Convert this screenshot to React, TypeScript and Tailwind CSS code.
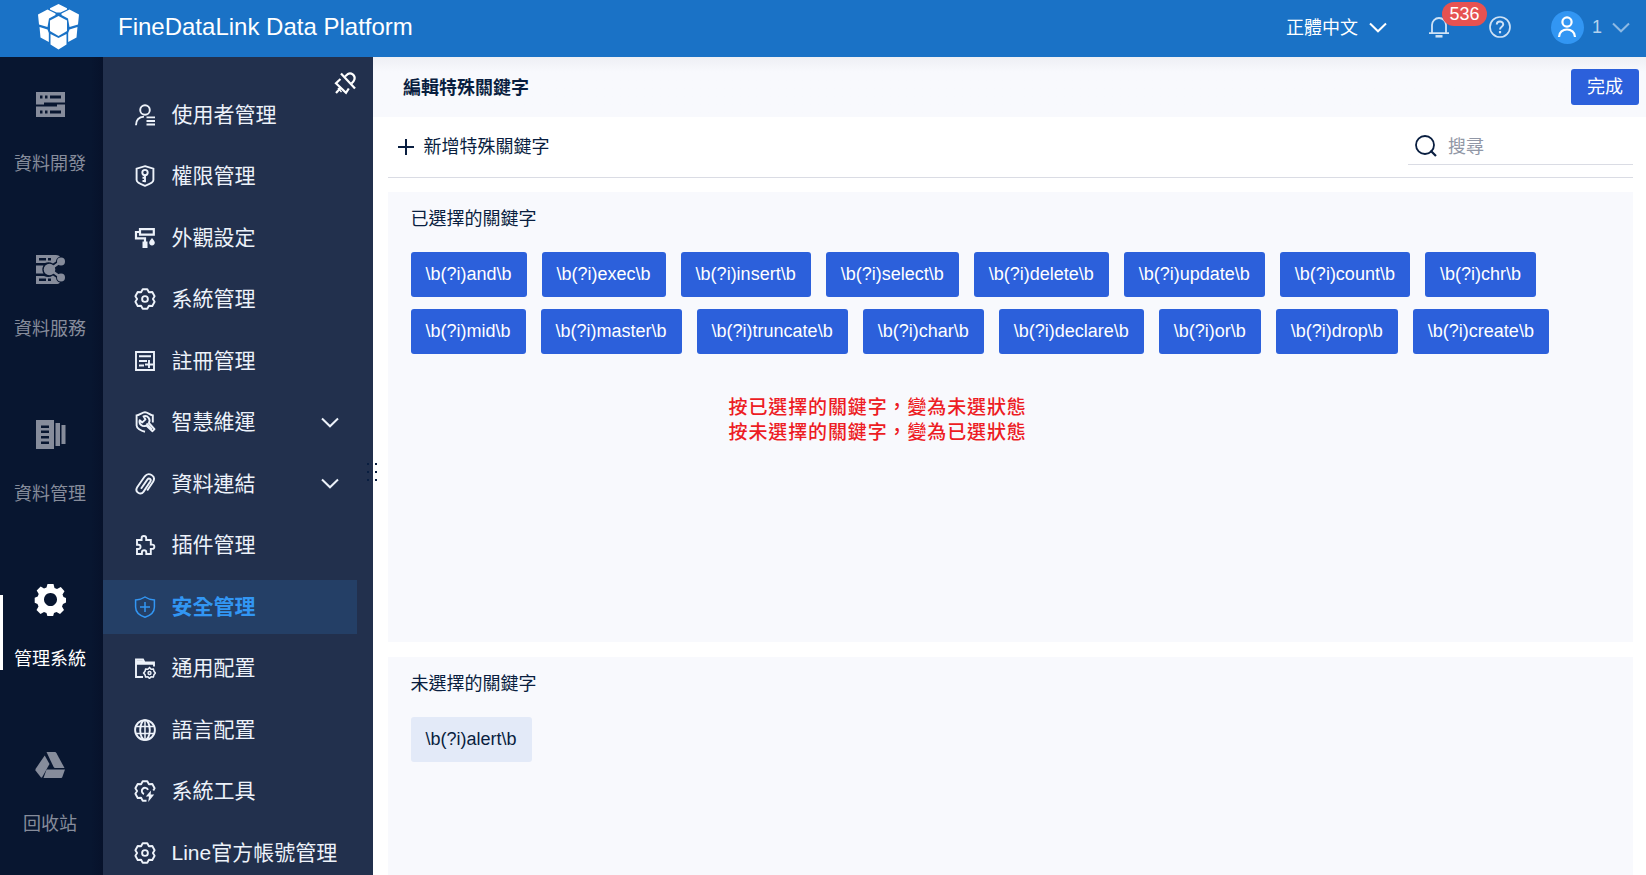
import { ReactNode, useState } from "react";

const selectedInit = [
  'and', 'exec', 'insert', 'select', 'delete', 'update', 'count', 'chr',
  'mid', 'master', 'truncate', 'char', 'declare', 'or', 'drop', 'create',
];

const Chevron = ({ className = '' }: { className?: string }) => (
  <svg width="18" height="11" viewBox="0 0 18 11" fill="none" stroke="currentColor" strokeWidth="2" className={className}>
    <path d="M1 1.5 9 9.3 17 1.5" />
  </svg>
);

/* 22x22 outline icons of the side menu */
const menuIcons: Record<string, ReactNode> = {
  user: (
    <>
      <circle cx="11" cy="6" r="4.8" />
      <path d="M2 21.2c0-5 2.8-8.2 8-8.6M12.5 13.4H21M12.5 17H21M12.5 20.5H21" />
    </>
  ),
  key: (
    <>
      <path d="M11 1.2 19.4 3.6V15c0 2-4.4 4.4-8.4 5.8-4-1.4-8.4-3.8-8.4-5.8V3.6Z" />
      <circle cx="11" cy="7.6" r="2.7" />
      <path d="M11 10.4v6.8M11 12.8H8.5M11 16H8.5" />
    </>
  ),
  roller: (
    <>
      <path d="M6 2.2h13.8v5.4H6ZM6 5H2v6.3h9V15" strokeWidth="2.2" />
      <path d="M8.5 14.5h5V21h-5Z" fill="currentColor" stroke="none" />
      <path d="M18 11c1.800 2.200 2.800 3.400 2.800 4.600a2.800 2.800 0 0 1-5.600 0c0-1.200 1-2.400 2.800-4.600Z" fill="currentColor" stroke="none" />
    </>
  ),
  gear: (
    <>
      <path d="M8.7 1.3h4.600L14.900 4.200l3.400-.2 2.300 4.300L18.900 11l1.700 2.700-2.300 4.300-3.400-.2-1.600 2.900H8.700l-1.600-2.900-3.400.2-2.300-4.300L3.100 11 1.400 8.300 3.700 4l3.400.2Z" strokeLinejoin="round" />
      <circle cx="11" cy="11" r="2.900" />
    </>
  ),
  register: (
    <path d="M2 2h18v18H2ZM5 6.300h12M5 11h8M5 15.500h5M15 10v8M11 14.500h8" />
  ),
  wrench: (
    <>
      <path d="M18.800 11.500V4.400C16.200 4 13.600 1.200 11 1.200S5.400 4 2.600 4.400V14.500c0 2.600 4 5.200 8.400 6.200" />
      <path d="M9.500 5.300c4.500-1.200 7.400 3 5.400 6.700l5.600 6.200-2 2-6.200-5.600c-4 1.800-7.600-1.400-6.600-5.400l2.600 2.200 3.200-3Z" strokeLinejoin="round" />
      <path d="M12.500 12.500l5.500 6" />
    </>
  ),
  clip: (
    <path d="M7 15.800 13.300 6.600c1.800-2.200 4.400-.4 3 1.900L9.600 18.600c-3 4.200-9.300.4-6.400-4.300l7.600-11c3.600-4.600 11.600-.6 8.400 5.200l-6 9" />
  ),
  plugin: (
    <path d="M3 6h4.600V4.300a2.300 2.300 0 0 1 4.600 0V6h4.600v4.600h1.400a2.100 2.100 0 0 1 0 4.300h-1.400V20h-4.500v-1.600a2.200 2.200 0 0 0-4.400 0V20H3v-5h1.400a2.100 2.100 0 0 0 0-4.300H3Z" />
  ),
  shield: (
    <g strokeWidth="1.500">
      <path d="M11 1c3 2 6.200 2.800 9.400 3V11c0 5-4 8.500-9.400 10.200C5.600 19.500 1.600 16 1.600 11V4c3.200-.2 6.400-1 9.400-3ZM11 6v10M6 11h10" />
    </g>
  ),
  folder: (
    <>
      <path d="M9 20H2V2.500h7l1.500 3H20V9.500" />
      <path d="M2 4.500h8M2 6.500h18" strokeWidth="2.400" />
      <path d="M15.500 10.500l1.600 1.700 2.300-.2.600 2.300 1.400 1.700-1.400 1.700-.6 2.300-2.300-.2-1.600 1.700-1.600-1.700-2.300.2-.6-2.300L9.600 16l1.400-1.700.6-2.300 2.300.2Z" strokeWidth="1.500" />
      <circle cx="15.500" cy="16" r="1.500" strokeWidth="1.400" />
    </>
  ),
  globe: (
    <>
      <circle cx="11" cy="11" r="9.900" />
      <ellipse cx="11" cy="11" rx="4.800" ry="9.900" />
      <path d="M1.500 7.500h19M1.500 14.500h19M11 1v20" strokeWidth="1.500" />
    </>
  ),
  tools: (
    <>
      <path d="M12.500 20.700H8.700l-1.600-2.900-3.400.2-2.300-4.300L3.100 11 1.400 8.300 3.700 4l3.400.2 1.600-2.900h4.600l1.600 2.900 3.400-.2 2.300 4.300-1.300 2.200" strokeLinejoin="round" />
      <path d="M14 9.800a3.200 3.200 0 1 0-4 4.200" />
      <path d="M17 10.500 11.800 16.600h3.200L14.200 22l6-7.400h-3.500Z" fill="currentColor" stroke="none" />
    </>
  ),
};

const menu = [
  { icon: 'user', label: '使用者管理' },
  { icon: 'key', label: '權限管理' },
  { icon: 'roller', label: '外觀設定' },
  { icon: 'gear', label: '系統管理' },
  { icon: 'register', label: '註冊管理' },
  { icon: 'wrench', label: '智慧維運', open: true },
  { icon: 'clip', label: '資料連結', open: true },
  { icon: 'plugin', label: '插件管理' },
  { icon: 'shield', label: '安全管理' },
  { icon: 'folder', label: '通用配置' },
  { icon: 'globe', label: '語言配置' },
  { icon: 'tools', label: '系統工具' },
  { icon: 'gear', label: 'Line官方帳號管理' },
];

/* 33x33 filled icons of the module rail */
const rail: { label: string; icon: ReactNode }[] = [
  {
    label: '資料開發',
    icon: (
      <path
        fillRule="evenodd"
        d="M2 4h29v10.500H10v2h21V29H2V18.500h21v-2H2V4ZM6 7.500v3h2.500v-3ZM11 7.500v3h2.500v-3ZM16 7.500v3h11v-3ZM6 22.500v3h2.500v-3ZM11 22.500v3h2.500v-3ZM16 22.500v3h11v-3Z"
      />
    ),
  },
  {
    label: '資料服務',
    icon: (
      <>
        <path fillRule="evenodd" d="M2 2h20c2 0 3 .8 4 1.500-3 1-4 3-4 5l-3 2a9 9 0 0 0-8-.5H2ZM5 5v2.500h7V5ZM14 5v2.500h3V5ZM2 12.500h7.500a8 8 0 0 0 0 8H2ZM2 23h8a9 9 0 0 0 9-.5l3 2c0 3 2 4.500 4 5-1 1-2 1.500-4 1.500H2ZM5 25.500V28h7v-2.500ZM14 25.500V28h3v-2.500Z" />
        <circle cx="15.500" cy="16.500" r="5.800" />
        <circle cx="27" cy="8.500" r="4" />
        <circle cx="27" cy="24.500" r="4" />
        <path d="M16 16.500 27 8.500M16 16.500l11 8" stroke="currentColor" strokeWidth="2.500" />
      </>
    ),
  },
  {
    label: '資料管理',
    icon: (
      <path fillRule="evenodd" d="M2 2h18v29H2ZM7 7.500V10h8V7.500ZM7 12.500V15h8v-2.500ZM7 18v2.500h8V18ZM7 23.500V26h8v-2.500ZM21.500 5H26v23h-4.500ZM27.500 7H31.500v19h-4Z" />
    ),
  },
  {
    label: '管理系統',
    icon: (
      <path
        fillRule="evenodd"
        d="M13.500 1h6l1 4 2.500 1 3.800-2 3.700 4.200-2 3.300 1 2.500 2.500 1v4.500l-3 1.500-1 2.500 2 3.500-4 4-3.500-2-2.500 1-1 3.500h-5.500l-1-3.500-2.500-1-3.500 2-4-4 2-3.500-1-2.500-2.800-1.200v-5l3-1.300 1-2.500-2-3.500 4-4 3.300 2 2.500-1ZM16.500 10a6.500 6.500 0 1 0 .01 0Z"
      />
    ),
  },
  {
    label: '回收站',
    icon: (
      <>
        <path d="M12.500 4h8c1 0 1.500.5 2 1.300L30.500 20H21.500c-1 0-1.500-.4-2-1.200Z" />
        <path d="M10.700 7.500l4.800 8.500-7.500 13.500H7L1.500 22.500v-1.500Z" />
        <path d="M13 21.500h18l-2.500 7c-.3 1-.8 1.500-2 1.500H9.500l2.500-7c.3-1 .5-1.200 1-1.500Z" />
      </>
    ),
  },
];

const tag = (word: string) => `\\b(?i)${word}\\b`;

export default function App() {
  const [selected, setSelected] = useState(selectedInit);
  const [unselected, setUnselected] = useState(['alert']);

  const deselect = (word: string) => {
    setSelected(selected.filter((w) => w !== word));
    setUnselected([...unselected, word]);
  };

  const select = (word: string) => {
    setUnselected(unselected.filter((w) => w !== word));
    setSelected([...selected, word]);
  };

  return (
    <div className="flex h-screen flex-col overflow-hidden bg-white text-[18px] leading-6 text-[#091e40] font-['Liberation_Sans','Noto_Sans_CJK_TC',sans-serif]">
      <header className="flex h-[57px] shrink-0 items-center bg-[#1a72c6] pl-[37px] pr-[16px] text-white">
        <svg width="43" height="46" viewBox="0 0 43 46" fill="#fff" className="-mt-1">
          <path d="M21.500 0 30 4.200v1.300L23.500 8.600h-4L13 5.500V4.200Z" />
          <path d="M10.500 5.500 18.500 9.500v1.400L12 14.500l-1.500 8.500L2 20.500 1 10.500Z" />
          <path d="M32.500 5.500 24.500 9.500v1.400L31 14.500l1.500 8.500 8.500-2.500 1-10Z" />
          <path d="M21.500 12 30 16.500v10.500l-8.500 5-8.500-5V16.500Z" />
          <path d="M2.500 23 10.500 25.500l1.300 3.500v9L3.500 33.500Z" />
          <path d="M40.500 23 32.500 25.500l-1.300 3.500v9l8.300-4.500Z" />
          <path d="M13.500 30 21.500 34l8-4v10.500L21.500 45.500l-8-5Z" />
        </svg>
        <h1 className="ml-[38px] text-[24px] leading-8 -mt-1">FineDataLink Data Platform</h1>

        <div className="ml-auto flex h-full items-center pb-[3px]">
          <span className="pt-px">正體中文</span>
          <Chevron className="ml-[11px]" />
          <div className="relative ml-[41px]">
            <svg width="22" height="22" viewBox="0 0 22 22" fill="none" stroke="#cfe2f5" strokeWidth="1.800">
              <path d="M4 17V9a7 7 0 0 1 14 0v8M1 17.200h20" />
              <path d="M7.500 20.300h7" strokeWidth="2.500" />
            </svg>
            <span className="absolute -top-[14px] left-[14px] flex h-6 w-[45px] items-center justify-center rounded-full bg-[#e65251]">
              536
            </span>
          </div>
          <svg width="22" height="22" viewBox="0 0 22 22" fill="none" stroke="#cfe2f5" strokeWidth="1.700" className="ml-[39px]">
            <circle cx="11" cy="11" r="10" />
            <path d="M7.800 8.600C7.800 4.600 14.200 4.700 14.200 8.400 14.200 10.800 11 10.600 11 13.400" strokeWidth="2" />
            <path d="M11 15v2.300" strokeWidth="2.200" />
          </svg>
          <span className="ml-10 flex h-[33px] w-[33px] items-center justify-center rounded-full bg-[#3296f3]">
            <svg width="20" height="22" viewBox="0 0 20 22" fill="none" stroke="#fff" strokeWidth="2.200">
              <circle cx="10" cy="6" r="4.600" />
              <path d="M2 21c0-10 16-10 16 0" />
            </svg>
          </span>
          <span className="ml-[8px] text-[#b4d2ee]">1</span>
          <Chevron className="ml-[10px] text-[#8db9e3]" />
        </div>
      </header>

      <div className="flex min-h-0 flex-1">
        <nav className="w-[103px] shrink-0 bg-linear-to-r from-[#081630] from-88% to-[#07122b]">
          {rail.map((item) => {
            const active = item.label === '管理系統';
            return (
              <div
                key={item.label}
                className={`relative flex h-[165px] flex-col items-center pr-[3px] pt-[31px] ${active ? 'text-white' : 'text-[#868c9b]'}`}
              >
                {active && <span className="absolute left-0 top-[43px] h-[75px] w-[3px] bg-white" />}
                <svg width="33" height="33" viewBox="0 0 33 33" fill="currentColor">
                  {item.icon}
                </svg>
                <span className="mt-[31px]">{item.label}</span>
              </div>
            );
          })}
        </nav>

        <aside className="relative w-[270px] shrink-0 bg-[#22304d] pt-[30.75px] text-[#edf2fa]">
          <svg width="24" height="24" viewBox="0 0 24 24" fill="none" stroke="#fff" strokeWidth="2.200" className="absolute left-[230px] top-[14px]">
            <path d="M3 22l5-5.500" />
            <path d="M7.500 8 3 12.200 13 21.800 15.800 17.500" />
            <path d="M12 5.500l3-2.500c3-2 7.500 1.500 6.500 5.200-.3 1.300-1.500 2.800-3 4.300" />
            <path d="M8 2.500 22 17.500" />
            <path d="M5 17l3.500 4" strokeWidth="1.400" />
          </svg>
          <ul className="flex flex-col gap-[7.5px]">
            {menu.map((item) => (
              <li
                key={item.label}
                className={`flex h-[54px] w-[254px] shrink-0 items-center pl-[31px] text-[21px] ${
                  item.icon === 'shield' ? 'bg-[#243f66] font-bold text-[#3296f3]' : ''
                }`}
              >
                <svg width="22" height="22" viewBox="0 0 22 22" fill="none" stroke="currentColor" strokeWidth="1.900" className="shrink-0">
                  {menuIcons[item.icon]}
                </svg>
                <span className="ml-[15.5px] whitespace-nowrap">{item.label}</span>
                {item.open && <Chevron className="ml-auto mr-[18px]" />}
              </li>
            ))}
          </ul>
          {/* resize grip */}
          <div className="absolute left-[264px] top-[406px] z-10 grid grid-cols-2 gap-x-2 gap-y-[6px]">
            {[0, 1, 2, 3, 4, 5].map((i) => (
              <span key={i} className="h-[2px] w-[2px] bg-[#091e40]" />
            ))}
          </div>
        </aside>

        <main className="flex min-w-0 flex-1 flex-col">
          <div className="flex h-[60px] shrink-0 items-center justify-between bg-linear-to-b from-[#eeeff4] to-[#f8f9fd] to-25% pl-[30px] pr-[7px]">
            <h2 className="pt-[2px] font-bold">編輯特殊關鍵字</h2>
            <button className="h-9 w-[68px] rounded-[3px] bg-[#2c60db] text-white">完成</button>
          </div>

          <div className="ml-[15px] mr-[13px] flex h-[61px] shrink-0 items-center justify-between border-b border-[#dadce4]">
            <button className="flex items-center pl-[10px]">
              <svg width="16" height="16" viewBox="0 0 16 16" stroke="currentColor" strokeWidth="2">
                <path d="M0 8h16M8 0v16" />
              </svg>
              <span className="ml-[9.5px]">新增特殊關鍵字</span>
            </button>
            <div className="mb-[1px] flex h-9 w-[225px] items-center border-b border-[#dadce4] pl-[7px]">
              <svg width="22" height="22" viewBox="0 0 22 22" fill="none" stroke="currentColor" strokeWidth="1.800">
                <circle cx="10" cy="10" r="9" />
                <path d="M15.500 15.500 21 21" strokeWidth="2.200" />
              </svg>
              <input className="ml-[11px] w-40 pt-px outline-none placeholder:text-[#9197a6]" placeholder="搜尋" />
            </div>
          </div>

          <section className="ml-[15px] mr-[13px] mt-[14px] h-[450px] shrink-0 bg-[#f8f9fd] px-[23px] pt-[15px]">
            <h3 className="-ml-[0.5px]">已選擇的關鍵字</h3>
            <div className="mt-[21px] flex flex-wrap gap-x-[15px] gap-y-3">
              {selected.map((word) => (
                <button key={word} onClick={() => deselect(word)} className="h-[45px] rounded-[3px] bg-[#2c60db] pb-[2px] pl-[14.5px] pr-[15.5px] text-white">
                  {tag(word)}
                </button>
              ))}
            </div>
            <p className="ml-[317.5px] mt-[41px] text-[19px] font-medium leading-[25px] tracking-[0.88px] text-[#ed1c24]">
              按已選擇的關鍵字，變為未選狀態
              <br />
              按未選擇的關鍵字，變為已選狀態
            </p>
          </section>

          <section className="ml-[15px] mr-[13px] mt-[15px] flex-1 bg-[#f8f9fd] px-[23px] pt-[15px]">
            <h3 className="-ml-[0.5px]">未選擇的關鍵字</h3>
            <div className="mt-[21px] flex flex-wrap gap-x-[15px] gap-y-3">
              {unselected.map((word) => (
                <button key={word} onClick={() => select(word)} className="h-[45px] rounded-[3px] bg-[#e3eaf8] pb-[2px] pl-[14.5px] pr-[15.5px]">
                  {tag(word)}
                </button>
              ))}
            </div>
          </section>
        </main>
      </div>
    </div>
  );
}
